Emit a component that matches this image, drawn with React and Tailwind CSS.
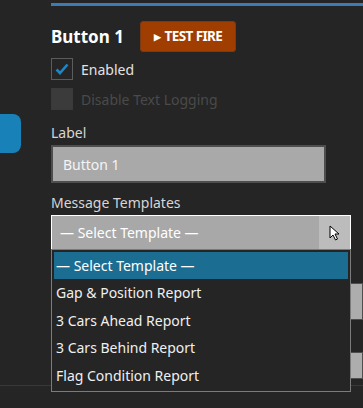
import React from 'react';

const templates = ['Gap & Position Report', '3 Cars Ahead Report', '3 Cars Behind Report', 'Flag Condition Report'];

const App = () => {
  return (
    <div
      className="relative w-[363px] h-[408px] overflow-hidden bg-[#252525] flex select-none"
      style={{ fontFamily: '"Noto Sans", "Open Sans", sans-serif' }}
    >
      {/* Sidebar tab */}
      <div className="w-[51px] shrink-0 pt-[114px]">
        <div className="w-[21px] h-[39px] bg-[#1781b8] rounded-r-[8px]" />
      </div>

      <div className="flex-1 flex flex-col">
        <div className="mt-[3px] h-[3px] bg-[#3f7bb3]" />

        {/* Header */}
        <div className="flex items-center gap-[16px] mt-[15px] h-[31px]">
          <span className="text-[17px] font-bold text-white leading-none">Button 1</span>
          <button className="h-[31px] w-[96px] rounded-[3px] bg-[#a03d00] border border-[#7a3a14] text-white font-bold flex items-center justify-center gap-[4px]">
            <span className="text-[9px]">▶</span>
            <span className="text-[13.5px] tracking-[-0.6px]">TEST FIRE</span>
          </button>
        </div>

        {/* Checkboxes */}
        <div className="flex items-center mt-[6px] h-[22px]">
          <div className="w-[22px] h-[22px] border border-[#5c5c5c] flex items-center justify-center">
            <svg width="14" height="12" viewBox="0 0 14 12">
              <path d="M1.5 6.5 L5 10 L12.5 1.5" fill="none" stroke="#1e86c4" strokeWidth="2.6" />
            </svg>
          </div>
          <span className="ml-[8px] text-[14px] text-[#e2e2e2]">Enabled</span>
        </div>
        <div className="flex items-center mt-[8px] h-[22px]">
          <div className="w-[22px] h-[22px] border border-[#3a3a3a] bg-[#3b3b3b]" />
          <span className="ml-[8px] text-[14px] text-[#4a4a4a]">Disable Text Logging</span>
        </div>

        {/* Label */}
        <div className="mt-[13px] text-[14px] text-[#d6d6d6] leading-[20px]">Label</div>
        <div className="mt-[2px] w-[275px] h-[38px] bg-[#a9a9a9] border-2 border-[#4e4e4e] flex items-center px-[10px] text-[14px] text-[#f4f4f4]">
          Button 1
        </div>

        {/* Templates */}
        <div className="mt-[10px] text-[14px] text-[#d6d6d6] leading-[20px]">Message Templates</div>
        <div className="mt-[2px] w-[300px] h-[35px] bg-[#a8a8a8] border border-white flex items-stretch">
          <div className="flex-1 flex items-center px-[8px] text-[14px] text-white">— Select Template —</div>
          <div className="w-[31px] bg-[#bcbcbc] flex items-center justify-center">
            <svg width="14" height="16" viewBox="0 0 14 16">
              <path d="M2 1 L2 13 L5 10 L7.5 15 L9.5 14 L7 9 L11 9 Z" fill="#fff" stroke="#000" strokeWidth="1" />
            </svg>
          </div>
        </div>

        {/* Underlying fields */}
        <div className="mt-[33px] h-[37px] bg-[#adadad] border border-[#4e4e4e]" />
        <div className="mt-[32px] h-[27px] bg-[#adadad] border border-[#4e4e4e]" />
        <div className="mt-[6px] h-px bg-[#383838] -ml-[51px]" />

        {/* Dropdown list */}
        <div className="absolute left-[51px] top-[249px] w-[300px] h-[143px] bg-[#252525] border border-[#7b7b7b] p-[2px] flex flex-col">
          <div className="h-[27px] bg-[#1b6e92] flex items-center px-[2px] text-[14px] text-white">— Select Template —</div>
          {templates.map((t) => (
            <div key={t} className="h-[27.5px] flex items-center px-[2px] text-[14px] text-[#f0f0f0]">
              {t}
            </div>
          ))}
        </div>
      </div>
    </div>
  );
};

export default App;
